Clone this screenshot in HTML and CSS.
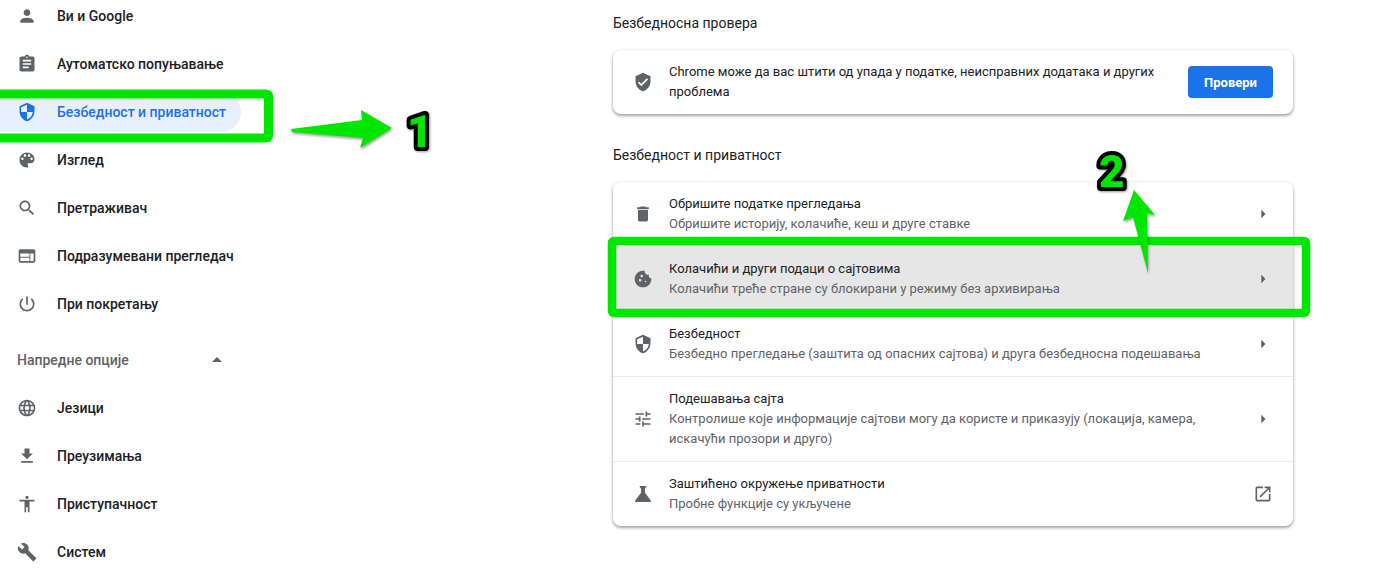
FILE: index.html
```html
<!DOCTYPE html>
<html lang="sr">
  <head>
    <meta charset="UTF-8" />
    <meta name="viewport" content="width=device-width, initial-scale=1.0" />
    <title>Безбедност и приватност</title>
    <link rel="stylesheet" href="styles.css">
  </head>
  <body>
    <div class="page">
      <nav class="sidebar">
        <a class="navItem">
          <svg class="icon" viewBox="0 0 24 24"><path d="M12 12c2.21 0 4-1.79 4-4s-1.79-4-4-4-4 1.79-4 4 1.79 4 4 4zm0 2c-2.67 0-8 1.34-8 4v2h16v-2c0-2.66-5.33-4-8-4z"/></svg>
          <span>Ви и Google</span>
        </a>
        <a class="navItem">
          <svg class="icon" viewBox="0 0 24 24"><path d="M19 3h-4.18C14.4 1.84 13.3 1 12 1c-1.3 0-2.4.84-2.82 2H5c-1.1 0-2 .9-2 2v14c0 1.1.9 2 2 2h14c1.1 0 2-.9 2-2V5c0-1.1-.9-2-2-2zm-7 0c.55 0 1 .45 1 1s-.45 1-1 1-1-.45-1-1 .45-1 1-1zm2 14H7v-2h7v2zm3-4H7v-2h10v2zm0-4H7V7h10v2z"/></svg>
          <span>Аутоматско попуњавање</span>
        </a>
        <a class="navItem active">
          <svg class="icon" viewBox="0 0 24 24"><path d="M12 1L3 5v6c0 5.55 3.84 10.74 9 12 5.16-1.26 9-6.45 9-12V5l-9-4zm0 10.99h7c-.53 4.12-3.28 7.79-7 8.94V12H5V6.3l7-3.11v8.8z"/></svg>
          <span>Безбедност и приватност</span>
        </a>
        <a class="navItem">
          <svg class="icon" viewBox="0 0 24 24"><path d="M12 3c-4.97 0-9 4.03-9 9s4.03 9 9 9c.83 0 1.5-.67 1.5-1.5 0-.39-.15-.74-.39-1.01-.23-.26-.38-.61-.38-.99 0-.83.67-1.5 1.5-1.5H16c2.76 0 5-2.24 5-5 0-4.42-4.03-8-9-8zm-5.5 9c-.83 0-1.5-.67-1.5-1.5S5.67 9 6.5 9 8 9.67 8 10.5 7.33 12 6.5 12zm3-4C8.67 8 8 7.33 8 6.5S8.67 5 9.5 5s1.5.67 1.5 1.5S10.33 8 9.5 8zm5 0c-.83 0-1.5-.67-1.5-1.5S13.67 5 14.5 5s1.5.67 1.5 1.5S15.33 8 14.5 8zm3 4c-.83 0-1.5-.67-1.5-1.5S16.67 9 17.5 9s1.5.67 1.5 1.5-.67 1.5-1.5 1.5z"/></svg>
          <span>Изглед</span>
        </a>
        <a class="navItem">
          <svg class="icon" viewBox="0 0 24 24"><path d="M15.5 14h-.79l-.28-.27C15.41 12.59 16 11.11 16 9.5 16 5.91 13.09 3 9.5 3S3 5.91 3 9.5 5.91 16 9.5 16c1.61 0 3.09-.59 4.23-1.57l.27.28v.79l5 4.99L20.49 19l-4.99-5zm-6 0C7.01 14 5 11.99 5 9.5S7.01 5 9.5 5 14 7.01 14 9.5 11.99 14 9.5 14z"/></svg>
          <span>Претраживач</span>
        </a>
        <a class="navItem">
          <svg class="icon" viewBox="0 0 24 24"><path d="M20 4H4c-1.1 0-1.99.9-1.99 2L2 18c0 1.1.9 2 2 2h16c1.1 0 2-.9 2-2V6c0-1.1-.9-2-2-2zm-5 14H4v-4h11v4zm0-5H4V9h11v4zm5 5h-4V9h4v9z"/></svg>
          <span>Подразумевани прегледач</span>
        </a>
        <a class="navItem">
          <svg class="icon" viewBox="0 0 24 24"><path d="M13 3h-2v10h2V3zm4.83 2.17l-1.42 1.42C17.99 7.86 19 9.81 19 12c0 3.87-3.13 7-7 7s-7-3.13-7-7c0-2.19 1.01-4.14 2.58-5.42L6.17 5.17C4.23 6.82 3 9.26 3 12c0 4.97 4.03 9 9 9s9-4.03 9-9c0-2.74-1.23-5.18-3.17-6.83z"/></svg>
          <span>При покретању</span>
        </a>
        <div class="advanced">
          <span>Напредне опције</span>
          <svg class="caret" viewBox="0 0 24 24"><path d="M7 14l5-5 5 5z"/></svg>
        </div>
        <a class="navItem">
          <svg class="icon" viewBox="0 0 24 24"><path d="M11.99 2C6.47 2 2 6.48 2 12s4.47 10 9.99 10C17.52 22 22 17.52 22 12S17.52 2 11.99 2zm6.93 6h-2.95c-.32-1.25-.78-2.45-1.38-3.56 1.84.63 3.37 1.91 4.33 3.56zM12 4.04c.83 1.2 1.48 2.53 1.91 3.96h-3.82c.43-1.43 1.08-2.76 1.91-3.96zM4.26 14C4.1 13.36 4 12.69 4 12s.1-1.36.26-2h3.38c-.08.66-.14 1.32-.14 2 0 .68.06 1.34.14 2H4.26zm.82 2h2.95c.32 1.25.78 2.45 1.38 3.56-1.84-.63-3.37-1.9-4.33-3.56zm2.95-8H5.08c.96-1.66 2.49-2.93 4.33-3.56C8.81 5.55 8.35 6.75 8.03 8zM12 19.96c-.83-1.2-1.48-2.53-1.91-3.96h3.82c-.43 1.43-1.08 2.76-1.91 3.96zM14.34 14H9.66c-.09-.66-.16-1.32-.16-2 0-.68.07-1.35.16-2h4.68c.09.65.16 1.32.16 2 0 .68-.07 1.34-.16 2zm.25 5.56c.6-1.11 1.06-2.31 1.38-3.56h2.95c-.96 1.65-2.49 2.93-4.33 3.56zM16.36 14c.08-.66.14-1.32.14-2 0-.68-.06-1.34-.14-2h3.38c.16.64.26 1.31.26 2s-.1 1.36-.26 2h-3.38z"/></svg>
          <span>Језици</span>
        </a>
        <a class="navItem">
          <svg class="icon" viewBox="0 0 24 24"><path d="M19 9h-4V3H9v6H5l7 7 7-7zM5 18v2h14v-2H5z"/></svg>
          <span>Преузимања</span>
        </a>
        <a class="navItem">
          <svg class="icon" viewBox="0 0 24 24"><path d="M12 2c1.1 0 2 .9 2 2s-.9 2-2 2-2-.9-2-2 .9-2 2-2zm9 7h-6v13h-2v-6h-2v6H9V9H3V7h18v2z"/></svg>
          <span>Приступачност</span>
        </a>
        <a class="navItem">
          <svg class="icon" viewBox="0 0 24 24"><path d="M22.7 19l-9.1-9.1c.9-2.3.4-5-1.5-6.9-2-2-5-2.4-7.4-1.3L9 6 6 9 1.6 4.7C.4 7.1.9 10.1 2.9 12.1c1.9 1.9 4.6 2.4 6.9 1.5l9.1 9.1c.4.4 1 .4 1.4 0l2.3-2.3c.5-.4.5-1.1.1-1.4z"/></svg>
          <span>Систем</span>
        </a>
      </nav>

      <main class="content">
        <h2 class="sectionTitle">Безбедносна провера</h2>
        <section class="card checkCard">
          <svg class="icon" viewBox="0 0 24 24"><path d="M12 1L3 5v6c0 5.55 3.84 10.74 9 12 5.16-1.26 9-6.45 9-12V5l-9-4zm-2 16l-4-4 1.41-1.41L10 14.17l6.59-6.59L18 9l-8 8z"/></svg>
          <p class="checkText">Chrome може да вас штити од упада у податке, неисправних додатака и других проблема</p>
          <button class="checkButton">Провери</button>
        </section>

        <h2 class="sectionTitle second">Безбедност и приватност</h2>
        <section class="card">
          <div class="row">
            <svg class="icon" viewBox="0 0 24 24"><path d="M6 19c0 1.1.9 2 2 2h8c1.1 0 2-.9 2-2V7H6v12zM19 4h-3.5l-1-1h-5l-1 1H5v2h14V4z"/></svg>
            <div class="rowText">
              <div class="rowTitle">Обришите податке прегледања</div>
              <div class="rowSub">Обришите историју, колачиће, кеш и друге ставке</div>
            </div>
            <svg class="arrow" viewBox="0 0 24 24"><path d="M10 17l5-5-5-5v10z"/></svg>
          </div>
          <div class="row hovered">
            <svg class="icon" viewBox="0 0 24 24"><path d="M21.95 10.99c-1.79-.03-3.7-1.95-2.68-4.22-2.97 1-5.78-1.59-5.19-4.56C7.11.74 2 6.41 2 12c0 5.52 4.48 10 10 10 5.89 0 10.54-5.08 9.95-11.01zM8.5 15c-.83 0-1.5-.67-1.5-1.5S7.67 12 8.5 12s1.5.67 1.5 1.5S9.33 15 8.5 15zm2-5C9.67 10 9 9.33 9 8.5S9.67 7 10.5 7s1.5.67 1.5 1.5-.67 1.5-1.5 1.5zm4.5 6c-.55 0-1-.45-1-1 0-.55.45-1 1-1s1 .45 1 1c0 .55-.45 1-1 1z"/></svg>
            <div class="rowText">
              <div class="rowTitle">Колачићи и други подаци о сајтовима</div>
              <div class="rowSub">Колачићи треће стране су блокирани у режиму без архивирања</div>
            </div>
            <svg class="arrow" viewBox="0 0 24 24"><path d="M10 17l5-5-5-5v10z"/></svg>
          </div>
          <div class="row">
            <svg class="icon" viewBox="0 0 24 24"><path d="M12 1L3 5v6c0 5.55 3.84 10.74 9 12 5.16-1.26 9-6.45 9-12V5l-9-4zm0 10.99h7c-.53 4.12-3.28 7.79-7 8.94V12H5V6.3l7-3.11v8.8z"/></svg>
            <div class="rowText">
              <div class="rowTitle">Безбедност</div>
              <div class="rowSub">Безбедно прегледање (заштита од опасних сајтова) и друга безбедносна подешавања</div>
            </div>
            <svg class="arrow" viewBox="0 0 24 24"><path d="M10 17l5-5-5-5v10z"/></svg>
          </div>
          <div class="row">
            <svg class="icon" viewBox="0 0 24 24"><path d="M3 17v2h6v-2H3zM3 5v2h10V5H3zm10 16v-2h8v-2h-8v-2h-2v6h2zM7 9v2H3v2h4v2h2V9H7zm14 4v-2H11v2h10zm-6-4h2V7h4V5h-4V3h-2v6z"/></svg>
            <div class="rowText">
              <div class="rowTitle">Подешавања сајта</div>
              <div class="rowSub">Контролише које информације сајтови могу да користе и приказују (локација, камера, искачући прозори и друго)</div>
            </div>
            <svg class="arrow" viewBox="0 0 24 24"><path d="M10 17l5-5-5-5v10z"/></svg>
          </div>
          <div class="row">
            <svg class="icon" viewBox="2 2 20 20"><path d="M19.8 18.4L14 10.67V6.5l1.35-1.69c.26-.33.03-.81-.39-.81H9.04c-.42 0-.65.48-.39.81L10 6.5v4.17L4.2 18.4c-.49.66-.02 1.6.8 1.6h14c.82 0 1.29-.94.8-1.6z"/></svg>
            <div class="rowText">
              <div class="rowTitle">Заштићено окружење приватности</div>
              <div class="rowSub">Пробне функције су укључене</div>
            </div>
            <svg class="arrow" viewBox="0 0 24 24"><path d="M19 19H5V5h7V3H5c-1.11 0-2 .9-2 2v14c0 1.1.89 2 2 2h14c1.1 0 2-.9 2-2v-7h-2v7zM14 3v2h3.59l-9.83 9.83 1.41 1.41L19 6.41V10h2V3h-7z"/></svg>
          </div>
        </section>
      </main>
    </div>

    <!-- annotations drawn over the screenshot -->
    <svg class="marks" viewBox="0 0 1373 580">
      <rect class="frame" x="-12" y="94" width="280.5" height="44" rx="2" stroke-width="9" />
      <rect class="frame" x="612" y="241" width="694" height="72" rx="2" stroke-width="8.5" />
      <polygon class="pointer" points="291,129 362,120 361,110 392,128 360,148 363,138 292,132" />
      <polygon class="pointer" points="1134,190 1155,215 1147,213 1148,273 1133,217 1123,221" />
      <text class="digit" x="407" y="147">1</text>
      <text class="digit" x="1099" y="187">2</text>
    </svg>
  </body>
</html>
```

FILE: styles.css
```css
:root {
  --text: #202124;
  --muted: #5f6368;
  --blue: #1a73e8;
  --green: #00e600;
}
* {
  margin: 0;
  padding: 0;
  box-sizing: border-box;
}
html,
body {
  height: 100%;
  overflow: hidden;
}
body {
  position: relative;
  background-color: #ffffff;
  font-family: Roboto, "Liberation Sans", sans-serif;
  font-size: 13px;
  color: var(--text);
}
.page {
  display: flex;
}

.icon {
  flex: none;
  width: 20px;
  height: 20px;
  fill: var(--muted);
}

/* sidebar */
.sidebar {
  flex: none;
  width: 613px;
  margin-top: -4px;
  display: flex;
  flex-direction: column;
  gap: 8px;
}
.navItem {
  display: flex;
  align-items: center;
  gap: 20px;
  width: 241px;
  height: 40px;
  padding-left: 17px;
  font-size: 14px;
  font-weight: 500;
  border-radius: 0 20px 20px 0;
}
.navItem.active {
  background-color: #e8f0fe;
  color: var(--blue);
}
.navItem.active .icon {
  fill: var(--blue);
}
.advanced {
  display: flex;
  align-items: center;
  justify-content: space-between;
  width: 229px;
  height: 40px;
  margin-top: 8px;
  padding-left: 17px;
  font-size: 14px;
  font-weight: 500;
  color: var(--muted);
}
.caret {
  width: 24px;
  height: 24px;
  fill: var(--muted);
}

/* main column */
.content {
  flex: none;
  width: 680px;
  padding-top: 15px;
}
.sectionTitle {
  font-size: 14px;
  font-weight: 400;
  line-height: 16px;
}
.sectionTitle.second {
  margin-top: 33px;
}
.card {
  margin-top: 19px;
  background-color: #ffffff;
  border-radius: 8px;
  overflow: hidden;
  box-shadow: 0 2px 3px rgba(60, 64, 67, 0.35), 0 1px 3px 1px rgba(60, 64, 67, 0.15);
}
.checkCard {
  display: flex;
  align-items: center;
  gap: 16px;
  height: 64px;
  padding: 0 20px;
}
.checkText {
  flex: 1;
  line-height: 20px;
}
.checkButton {
  flex: none;
  width: 85px;
  height: 32px;
  border: none;
  border-radius: 4px;
  background-color: var(--blue);
  color: #ffffff;
  font-family: inherit;
  font-size: 13px;
  font-weight: 700;
}
.row {
  display: flex;
  align-items: center;
  gap: 16px;
  padding: 12px 20px;
  line-height: 20px;
  border-top: 1px solid #e8eaed;
}
.row:first-child {
  border-top: none;
}
.row.hovered {
  background-color: #e6e6e6;
  border-top-color: transparent;
}
.rowText {
  flex: 1;
  padding-right: 22px;
}
.rowSub {
  color: var(--muted);
}
.arrow {
  flex: none;
  width: 20px;
  height: 20px;
  fill: var(--muted);
}

/* annotations */
.marks {
  position: absolute;
  top: 0;
  left: 0;
  width: 1373px;
  height: 580px;
  pointer-events: none;
}
.frame {
  fill: none;
  stroke: var(--green);
}
.pointer {
  fill: var(--green);
  filter: drop-shadow(1px 2px 1px rgba(0, 0, 0, 0.35));
}
.digit {
  font-family: Roboto, sans-serif;
  font-size: 44px;
  font-weight: 900;
  fill: var(--green);
  stroke: #000000;
  stroke-width: 8px;
  stroke-linejoin: round;
  paint-order: stroke;
  filter: drop-shadow(1px 1px 1px rgba(0, 0, 0, 0.4));
}
```
